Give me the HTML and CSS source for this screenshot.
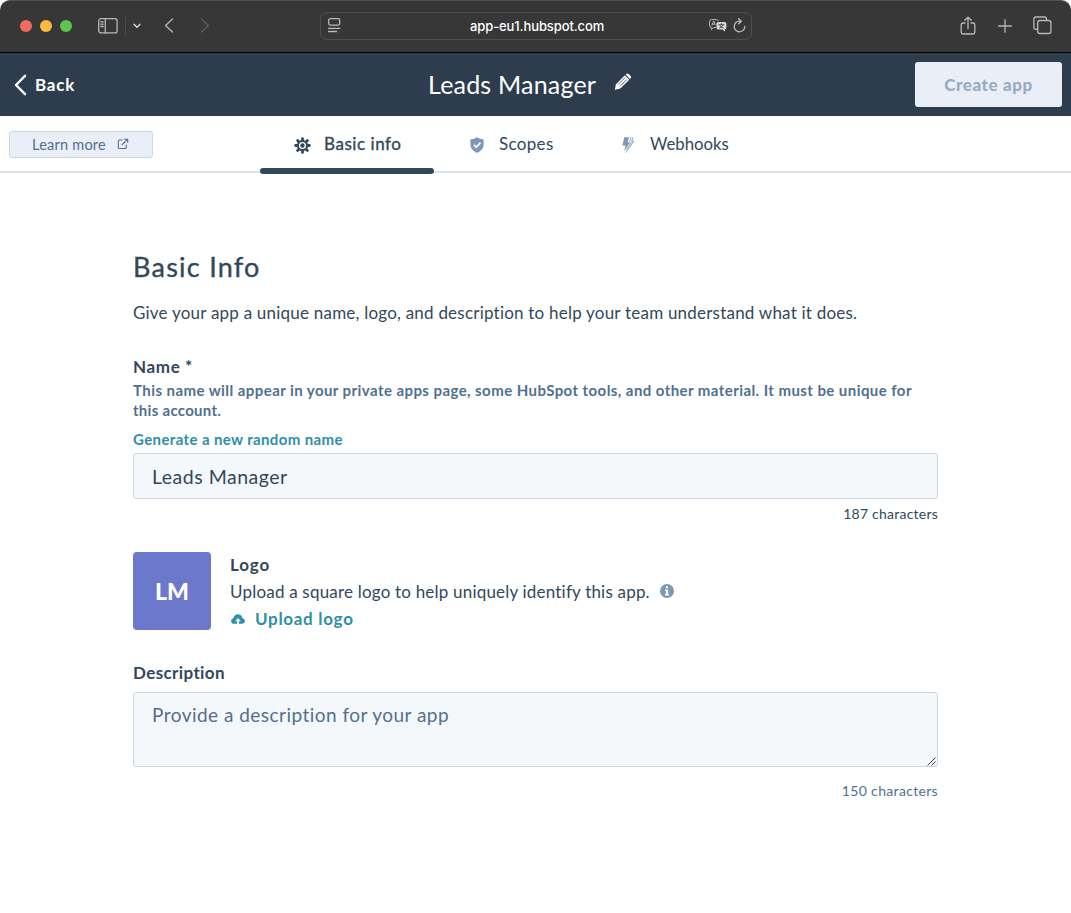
FILE: index.html
```html
<!DOCTYPE html>
<html lang="en">
<head>
<meta charset="utf-8">
<title>Leads Manager</title>
<link rel="stylesheet" href="styles.css">
</head>
<body>
<div class="window">
  <div class="chrome">
    <div class="lights"><i class="light red"></i><i class="light yellow"></i><i class="light green"></i></div>
    <svg class="ic sidebar" width="20" height="16" viewBox="0 0 20 16"><rect x=".7" y=".7" width="18.4" height="14.2" rx="2.2"/><path d="M7.3 1v14M2.8 3.9h2.4M2.8 6.2h2.4M2.8 8.5h2.4"/></svg>
    <span class="divider"></span>
    <svg class="ic chev" width="8" height="6" viewBox="0 0 8 6"><path d="M1 1.3l3 2.9 3-2.9"/></svg>
    <svg class="ic prev" width="10" height="15" viewBox="0 0 10 15"><path d="M8.5 1L1.5 7.5l7 6.5"/></svg>
    <svg class="ic next" width="10" height="15" viewBox="0 0 10 15"><path d="M1.5 1l7 6.5-7 6.5"/></svg>
    <div class="address">
      <svg class="ic reader" width="13" height="15" viewBox="0 0 13 15"><rect x=".7" y=".7" width="11" height="6.4" rx="1.5"/><path d="M.5 10.3h11.3M.5 13.5h8"/></svg>
      <span class="url">app-eu1.hubspot.com</span>
      <svg class="translate" width="18" height="13" viewBox="0 0 18 13"><path class="bub" d="M7 8.5H4.5L2.4 10.7V8.5Q.6 8.5.6 6.8V2.3Q.6.6 2.4.6h5Q9 .6 9.2 2"/><path class="bub" d="M2.8 6.7L4.7 2l1.7 4M3.5 5.2h2.4"/><path class="fill" d="M9.3 3h6.2Q17.4 3 17.4 4.8v3.9q0 1.8-1.4 1.8v2.2l-2.4-2.2H9.3q-1.8 0-1.8-1.8V4.8Q7.5 3 9.3 3z"/><path class="cut" d="M12.4 4v1.5M9.5 5.700h5.800M10.200 9.200Q13.600 8 14 5.700M10.800 6q.8 2.500 3.900 3.200"/></svg>
      <svg class="ic reload" width="13" height="15" viewBox="0 0 13 15"><path d="M6.8 3.2A5.3 5.3 0 1 0 11.8 8.3M5.600.8l2.700 2.500-2.600 2.500"/></svg>
    </div>
    <svg class="ic share" width="16" height="20" viewBox="0 0 16 20"><path d="M5 7H3Q1.200 7 1.200 8.800v7.500Q1.200 18 3 18h10q1.800 0 1.800-1.700V8.800Q14.800 7 13 7h-2M8 12.500V1.200M4.800 4.300L8 1.200l3.200 3.100"/></svg>
    <svg class="ic plus" width="14" height="14" viewBox="0 0 14 14"><path d="M7 .7v12.600M.7 7h12.600"/></svg>
    <svg class="ic tabsic" width="19" height="19" viewBox="0 0 19 19"><path d="M4.500 13.300H3Q.9 13.300.9 11.200V3Q.9 1 3 1h8.500q2 0 2 2.100v1.300"/><rect x="4.700" y="4.500" width="13.200" height="13" rx="2.200"/></svg>
  </div>
  <header class="appbar">
    <a class="back"><svg width="13" height="22" viewBox="0 0 13 22"><path d="M11 1.800L2 11l9 9.200"/></svg><span>Back</span></a>
    <div class="title"><span>Leads Manager</span>
      <svg width="18" height="18" viewBox="0 0 18 18"><path class="pen" d="M.8 16.700L2 11.200 10.900 2.300l4.400 4.400L6.300 15.500z"/><path class="pen" d="M11.700 1.500L12.600.7Q13.600.1 14.600.9l2.100 2.100q.8 1 .1 2l-.8.9z"/><path class="nib" d="M4 11.600l7.100-7.100M5.900 13.400l7-7"/></svg>
    </div>
    <button class="create">Create app</button>
  </header>
  <nav class="tabs">
    <a class="learn"><span>Learn more</span><svg width="12" height="12" viewBox="0 0 12 12"><path d="M5.500 2H2.300Q1.300 2 1.300 3v6.500q0 1 1 1h6q1 0 1-1V6.500M4.800 7L10 1.800M7 1.200h3.700v3.600"/></svg></a>
    <div class="tab active">
      <svg width="17" height="17" viewBox="-8.500 -8.500 17 17"><path class="teeth" d="M0-6.900V6.900M-6.900 0H6.900M-4.900-4.900L4.900 4.900M4.900-4.900L-4.900 4.900"/><circle class="gear" r="5.600"/><circle class="ring" r="2.900"/></svg>
      <span>Basic info</span></div>
    <div class="tab scopes">
      <svg width="14" height="16" viewBox="0 0 14 16"><path fill="#7c98b6" d="M7 .2Q9.500 2.300 13.600 2.400V8q0 5-6.600 7.900Q.4 13 .4 8V2.400Q4.500 2.300 7 .2z"/><path d="M3.900 7.900l2.300 2.300 4.300-4.600" fill="none" stroke="#fff" stroke-width="1.700"/></svg>
      <span>Scopes</span></div>
    <div class="tab hooks">
      <svg width="13" height="16" viewBox="0 0 13 16"><path fill="#7c98b6" d="M2.300.3h4.700L5.600 5.200h2.600L2 14.500 3.500 8.400H.4z"/><path d="M9.100.3L7.600 4.500M11 .3L9.700 4.300h2.200L3.600 15.600M9.600 5.200L4.500 12.500" fill="none" stroke="#7c98b6" stroke-width=".9"/></svg>
      <span>Webhooks</span></div>
  </nav>
  <main class="content">
    <h1>Basic Info</h1>
    <p class="intro">Give your app a unique name, logo, and description to help your team understand what it does.</p>
    <label class="label name">Name *</label>
    <p class="help">This name will appear in your private apps page, some HubSpot tools, and other material. It must be unique for<br><span class="help-end">this account.</span></p>
    <a class="generate">Generate a new random name</a>
    <div class="field">Leads Manager</div>
    <div class="count">187 characters</div>
    <section class="logo-row">
      <div class="logo">LM</div>
      <div class="logo-info">
        <div class="logo-title">Logo</div>
        <div class="logo-text"><span>Upload a square logo to help uniquely identify this app.</span>
          <svg width="14" height="14" viewBox="0 0 14 14"><circle cx="7" cy="7" r="7" fill="#7c98b6"/><path fill="#fff" d="M5.900 2.300h2.200v2H5.900zM5 5.600h3.100v4.300H9v1.500H5V9.900h.9V7.100H5z"/></svg></div>
        <a class="upload"><svg width="14" height="10" viewBox="0 0 14 10"><path fill="#2e8fa8" d="M3.500 9.800Q.1 9.700.1 6.900.2 4.600 2.500 4.300 3.200.2 6.900.2t4.500 4.100Q13.900 4.500 13.900 7q0 2.800-3.400 2.800H7.900V7.200h2L7 3.900 4.100 7.200h2v2.600z"/></svg><span>Upload logo</span></a>
      </div>
    </section>
    <label class="label desc">Description</label>
    <div class="area">Provide a description for your app<svg width="9" height="9" viewBox="0 0 9 9"><path d="M.5 8.500l8-8M4.500 8.500l4-4"/></svg></div>
    <div class="count muted">150 characters</div>
  </main>
</div>
</body>
</html>
```
FILE: styles.css
```css
* { box-sizing: border-box; }
body { margin: 0; background: #fff; color: #33475b; font-family: Lato, "Open Sans", sans-serif; font-variant-ligatures: none; }
h1, p { margin: 0; font-weight: 400; white-space: nowrap; }
svg { display: block; flex: none; }
span { white-space: nowrap; }
.window { width: 1071px; height: 913px; overflow: hidden; }
.chrome { height: 53px; display: flex; align-items: center; background: #373737; border-top: 1px solid #505050; border-bottom: 1px solid #000; border-radius: 10px 10px 0 0; padding: 0 0 2px 20px; }
.lights { display: flex; gap: 8px; }
.light { width: 12px; height: 12px; border-radius: 50%; }
.red { background: #f36a5e; }
.yellow { background: #f8bd40; }
.green { background: #5bc84b; }
.ic { fill: none; stroke: #b8b8b8; stroke-width: 1.3; stroke-linecap: round; stroke-linejoin: round; }
.sidebar { margin-left: 26px; }
.divider { width: 1px; height: 18px; background: #4b4b4b; margin-left: 7px; }
.chev { margin-left: 7px; stroke: #e0e0e0; }
.prev { margin-left: 23px; }
.next { margin-left: 26px; stroke: #5d5d5d; }
.address { width: 432px; height: 28px; margin-left: 110px; border: 1px solid #4f4f4f; border-radius: 7px; display: flex; align-items: center; padding-left: 7px; }
.url { color: #fff; font: 500 13px Inter, sans-serif; letter-spacing: -.1px; width: 134px; margin-left: 129px; }
.translate { margin-left: 105px; }
.bub { fill: none; stroke: #b8b8b8; }
.translate .fill { fill: #d8d8d8; }
.cut { fill: none; stroke: #444; stroke-width: .9; }
.reload { margin-left: 6px; }
.share { margin-left: 208px; }
.plus { margin-left: 22px; }
.tabsic { margin-left: 21px; }

.appbar { height: 63px; background: #2e3d4e; color: #fff; display: grid; grid-template-columns: 428px 1fr 156px; align-items: center; }
.back { display: flex; align-items: center; gap: 8px; padding-left: 14px; font-size: 17px; font-weight: 700; letter-spacing: .75px; }
.back path { fill: none; stroke: #fff; stroke-width: 2.4; stroke-linecap: round; stroke-linejoin: round; }
.title { display: flex; align-items: center; gap: 18px; padding-bottom: 2px; font-size: 25px; line-height: 34px; letter-spacing: .2px; }
.title svg { margin-bottom: 4px; }
.pen { fill: #fff; }
.nib { stroke: #2e3d4e; stroke-width: .8; }
.create { width: 147px; height: 45px; padding: 0 0 1px; border: 0; border-radius: 3px; background: #eaeff7; color: #99acc2; font: 900 17px Lato, sans-serif; letter-spacing: .6px; }

.tabs { height: 58px; display: flex; background: linear-gradient(#dbe2ec, #dbe2ec) 0 55px / 100% 2px no-repeat; }
.learn { width: 144px; height: 27px; margin: 15px 0 0 9px; border: 1px solid #cbd6e2; border-radius: 3px; background: #eaeff7; color: #506e91; font-size: 14.5px; letter-spacing: .23px; display: flex; align-items: center; gap: 11px; padding: 0 0 1px 22px; }
.learn path { fill: none; stroke: #506e91; stroke-width: 1.1; }
.tab { display: flex; align-items: center; height: 58px; padding-bottom: 4px; font-size: 17px; }
.tab svg { margin-top: 4px; }
.active { position: relative; margin-left: 107px; width: 174px; padding-left: 34px; gap: 13px; letter-spacing: .55px; -webkit-text-stroke: .35px; }
.active::after { content: ""; position: absolute; left: 0; bottom: 0; width: 174px; height: 6px; border-radius: 3px; background: #33475b; }
.teeth { stroke: #33475b; stroke-width: 2.8; stroke-linecap: round; }
.gear { fill: #33475b; }
.ring { fill: none; stroke: #fff; stroke-width: 1.4; }
.scopes { margin-left: 36px; gap: 15px; width: 152px; letter-spacing: .32px; }
.hooks { gap: 15px; font-size: 16.8px; }

.content { width: 805px; margin: 75px 0 0 133px; }
h1 { font-size: 27px; line-height: 36px; letter-spacing: 1.25px; -webkit-text-stroke: .35px; }
.intro { margin-top: 16px; font-size: 17px; line-height: 24px; letter-spacing: .22px; }
.label { display: block; margin-top: 32px; font-size: 17px; font-weight: 700; line-height: 20px; }
.name { letter-spacing: .63px; }
.help { margin-top: 3px; font-size: 15px; font-weight: 700; line-height: 20px; letter-spacing: .43px; color: #516f90; }
.help-end { letter-spacing: .28px; }
.generate { display: block; margin-top: 9px; font-size: 15px; font-weight: 700; line-height: 20px; letter-spacing: .38px; color: #2e8fa8; }
.field { height: 46px; margin-top: 4px; padding-left: 18px; border: 1px solid #cbd6e2; border-radius: 3px; background: #f5f8fa; font-size: 19.5px; line-height: 45px; letter-spacing: .5px; }
.count { margin-top: 5px; text-align: right; font-size: 14px; line-height: 20px; letter-spacing: .23px; }
.logo-row { display: flex; margin-top: 28px; gap: 18px; }
.logo { width: 78px; height: 78px; padding-bottom: 1px; border-radius: 4px; background: #6c78cc; color: #fff; font-size: 23px; font-weight: 900; display: flex; align-items: center; justify-content: center; }
.logo-info { padding: 3px 0 0 1px; display: flex; flex-direction: column; gap: 7px; font-size: 17px; line-height: 20px; }
.logo-title { font-weight: 700; letter-spacing: .85px; }
.logo-text { display: flex; align-items: center; gap: 10px; letter-spacing: .2px; }
.logo-text svg { margin-bottom: 2px; }
.upload { display: flex; align-items: center; gap: 10px; padding-left: 1px; font-weight: 700; letter-spacing: .7px; color: #2e8fa8; }
.desc { margin-top: 33px; letter-spacing: .38px; }
.area { position: relative; height: 75px; margin-top: 9px; padding: 9px 18px; border: 1px solid #cbd6e2; border-radius: 3px; background: #f5f8fa; color: #516f90; font-size: 19px; line-height: 26px; letter-spacing: .47px; }
.area svg { position: absolute; right: 1px; bottom: 0; }
.area path { stroke: #444; stroke-width: 1; }
.muted { margin-top: 14px; color: #516f90; letter-spacing: .33px; }
```
